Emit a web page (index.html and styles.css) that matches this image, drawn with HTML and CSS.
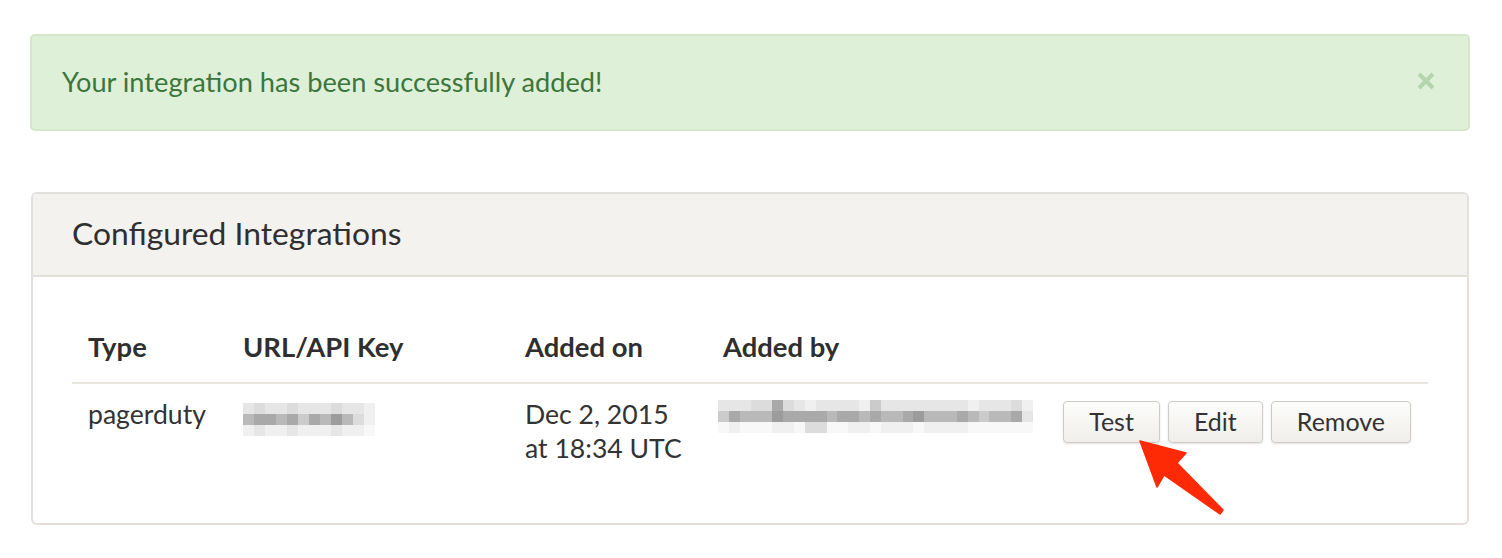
FILE: index.html
```html
<!DOCTYPE html>
<html>
<head>
<meta charset="utf-8">
<link rel="stylesheet" href="styles.css">
</head>
<body>
<div class="page">
  <div class="alert">
    <span class="alert-text">Your integration has been successfully added!</span>
    <button class="close" aria-label="Close">
      <svg width="20" height="20" viewBox="0 0 20 20"><path d="M3 3 L17 17 M17 3 L3 17" stroke="#b4d5ae" stroke-width="4.2" stroke-linecap="butt"/></svg>
    </button>
  </div>

  <div class="panel">
    <div class="panel-head">Configured Integrations</div>
    <div class="panel-body">
      <table class="tbl">
        <colgroup>
          <col class="c-type"><col class="c-url"><col class="c-date"><col class="c-by"><col>
        </colgroup>
        <thead>
          <tr><th>Type</th><th>URL/API Key</th><th>Added on</th><th>Added by</th><th></th></tr>
        </thead>
        <tbody>
          <tr>
            <td>pagerduty</td>
            <td>
              <div class="blur url">
                <div class="brow"><i class="k6"></i><i class="k5"></i><i class="k6"></i><i class="k6"></i><i class="k5"></i><i class="k6"></i><i class="k6"></i><i class="k6"></i><i class="k5"></i><i class="k6"></i><i class="k6"></i><i class="k7"></i></div>
                <div class="brow"><i class="k3"></i><i class="k2"></i><i class="k2"></i><i class="k3"></i><i class="k2"></i><i class="k4"></i><i class="k2"></i><i class="k3"></i><i class="k1"></i><i class="k3"></i><i class="k5"></i><i class="k7"></i></div>
                <div class="brow"><i class="k7"></i><i class="k6"></i><i class="k7"></i><i class="k7"></i><i class="k6"></i><i class="k7"></i><i class="k7"></i><i class="k7"></i><i class="k6"></i><i class="k7"></i><i class="k7"></i><i class="k8"></i></div>
              </div>
            </td>
            <td class="date">Dec 2, 2015<br>at 18:34 UTC</td>
            <td>
              <div class="blur by">
                <div class="brow"><i class="k6"></i><i class="k6"></i><i class="k6"></i><i class="k5"></i><i class="k5"></i><i class="k2"></i><i class="k5"></i><i class="k6"></i><i class="k7"></i><i class="k6"></i><i class="k6"></i><i class="k6"></i><i class="k6"></i><i class="k7"></i><i class="k4"></i><i class="k6"></i><i class="k6"></i><i class="k6"></i><i class="k6"></i><i class="k6"></i><i class="k6"></i><i class="k6"></i><i class="k6"></i><i class="k7"></i><i class="k6"></i><i class="k6"></i><i class="k6"></i><i class="k5"></i><i class="k7"></i></div>
                <div class="brow"><i class="k4"></i><i class="k2"></i><i class="k3"></i><i class="k3"></i><i class="k3"></i><i class="k1"></i><i class="k2"></i><i class="k2"></i><i class="k2"></i><i class="k2"></i><i class="k3"></i><i class="k2"></i><i class="k2"></i><i class="k3"></i><i class="k2"></i><i class="k3"></i><i class="k3"></i><i class="k2"></i><i class="k1"></i><i class="k3"></i><i class="k3"></i><i class="k3"></i><i class="k2"></i><i class="k3"></i><i class="k4"></i><i class="k3"></i><i class="k3"></i><i class="k2"></i><i class="k6"></i></div>
                <div class="brow"><i class="k8"></i><i class="k7"></i><i class="k8"></i><i class="k8"></i><i class="k8"></i><i class="k7"></i><i class="k7"></i><i class="k8"></i><i class="k5"></i><i class="k5"></i><i class="k8"></i><i class="k8"></i><i class="k7"></i><i class="k7"></i><i class="k8"></i><i class="k7"></i><i class="k7"></i><i class="k7"></i><i class="k8"></i><i class="k7"></i><i class="k7"></i><i class="k7"></i><i class="k7"></i><i class="k8"></i><i class="k8"></i><i class="k8"></i><i class="k8"></i><i class="k8"></i><i class="k8"></i></div>
              </div>
            </td>
            <td class="actions">
              <div class="btns">
                <button class="btn">Test</button>
                <button class="btn">Edit</button>
                <button class="btn">Remove</button>
              </div>
            </td>
          </tr>
        </tbody>
      </table>
    </div>
  </div>

  <svg class="arrow" width="1502" height="558" viewBox="0 0 1502 558">
    <path d="M1140 441 L1186 453 L1177 463 L1223 510 L1220 514 L1164 475 L1157 487 Z" fill="#fe2a06" stroke="#fe2a06" stroke-width="1.5" stroke-linejoin="round"/>
  </svg>
</div>
</body>
</html>
```

FILE: styles.css
```css
* { box-sizing: border-box; }
html, body {
  margin: 0;
  padding: 0;
  background: #ffffff;
}
body {
  font-family: Lato, "Noto Sans", sans-serif;
  color: #333333;
}
.page {
  position: relative;
  width: 1502px;
  height: 558px;
  padding: 34px 32px 0 30px;
}
.alert {
  height: 97px;
  background: #dff0d8;
  border: 2px solid #d3e8c8;
  border-radius: 5px;
  display: flex;
  align-items: center;
  justify-content: space-between;
  padding: 0 32px 0 30px;
}
.alert-text {
  color: #3c763d;
  font-size: 27.2px;
  margin-top: -3px;
}
.close {
  border: 0;
  background: none;
  padding: 0;
  width: 20px;
  height: 20px;
  display: flex;
  margin-top: -3px;
}
.panel {
  margin: 61px 1px 0 1px;
  border: 2px solid #e3e0dc;
  border-radius: 6px;
  height: 333px;
  overflow: hidden;
}
.panel-head {
  height: 83px;
  background: #f3f2ef;
  border-bottom: 2px solid #e3e0dc;
  padding: 0 0 4px 39px;
  display: flex;
  align-items: center;
  font-size: 31.8px;
  color: #2f2f2f;
}
.panel-body {
  padding: 39px 39px 0 39px;
}
.tbl {
  width: 100%;
  table-layout: fixed;
  border-collapse: collapse;
}
.c-type { width: 155px; }
.c-url { width: 282px; }
.c-date { width: 198px; }
.c-by { width: 342px; }
.tbl th {
  text-align: left;
  font-weight: 700;
  font-size: 27.4px;
  height: 67px;
  padding: 0 16px 5px 16px;
  border-bottom: 2px solid #e8e5e1;
  vertical-align: middle;
  color: #2f2f2f;
}
.tbl td {
  font-size: 26.6px;
  line-height: 34px;
  padding: 13px 16px 0 16px;
  vertical-align: top;
  height: 101px;
  color: #333;
}
.blur {
  display: flex;
  flex-direction: column;
}
.blur.url { margin-top: 6px; }
.blur.by { margin-top: 3px; margin-left: -5px; }
.brow { display: flex; }
.brow i {
  display: block;
  width: 11px;
  height: 11px;
}
.k1 { background: #9c9c9c; }
.k2 { background: #a9a9a9; }
.k3 { background: #b9b9b9; }
.k4 { background: #cbcbcb; }
.k5 { background: #dcdcdc; }
.k6 { background: #e6e6e6; }
.k7 { background: #f0f0f0; }
.k8 { background: #f8f8f8; }
.actions { padding-right: 17px !important; padding-top: 17px !important; }
.btns {
  display: flex;
  justify-content: flex-end;
  gap: 8px;
}
.btn {
  font-family: Lato, "Noto Sans", sans-serif;
  font-size: 25px;
  color: #333;
  height: 42px;
  padding: 0 25px 2px 25px;
  border: 1px solid #cfccc7;
  border-radius: 4px;
  background: linear-gradient(#fdfdfc, #efeeea);
  box-shadow: 0 1px 2px rgba(0,0,0,0.12);
}
.arrow {
  position: absolute;
  left: 0;
  top: 0;
  pointer-events: none;
}
```
